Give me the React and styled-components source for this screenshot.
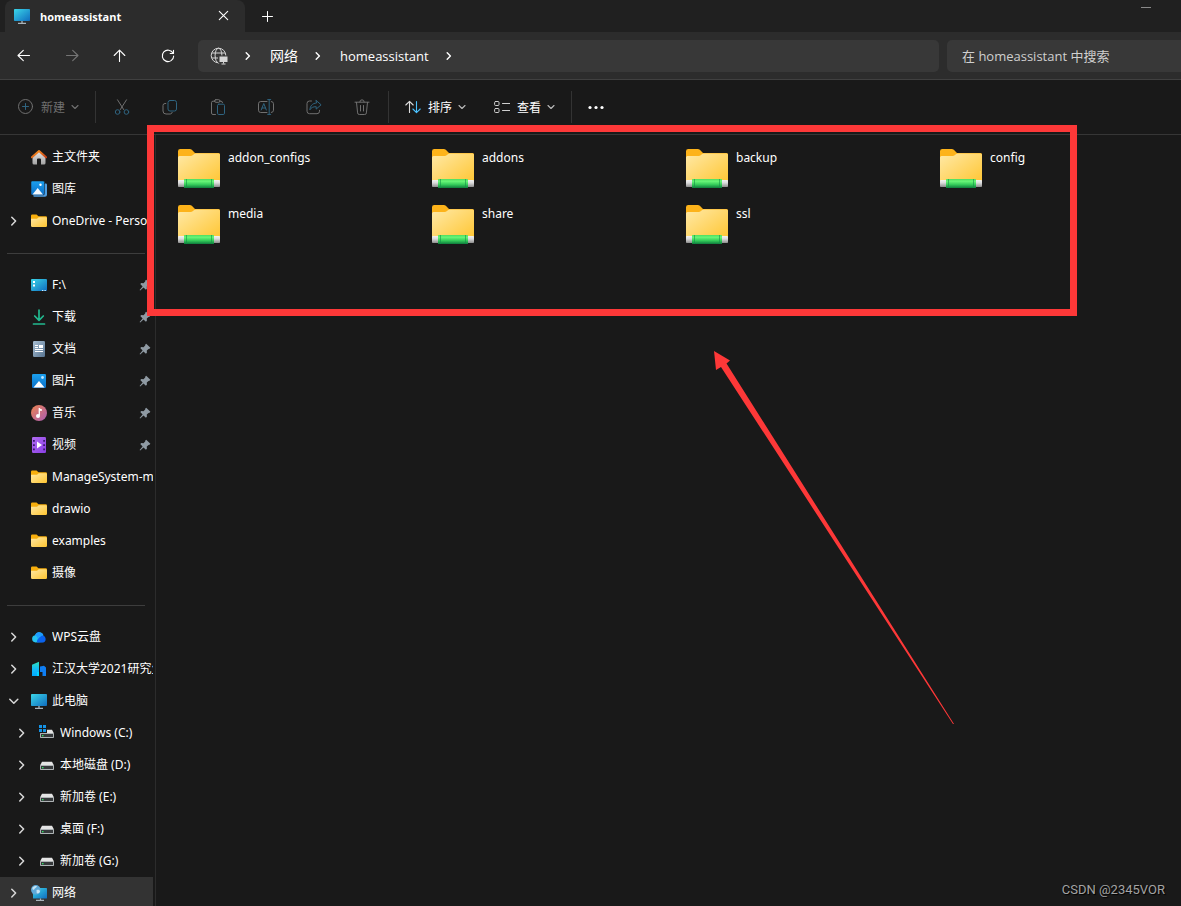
import React from 'react';
import styled, { createGlobalStyle } from 'styled-components';

const GlobalStyle = createGlobalStyle`
    * {
        box-sizing: border-box;
    }
    body {
        margin: 0;
        background: #191919;
        color: #ffffff;
        font-family: 'Noto Sans', 'Noto Sans CJK SC', sans-serif;
        font-size: 12px;
    }
    button, input {
        font: inherit;
        color: inherit;
    }
    svg {
        display: block;
        flex: none;
    }
    a {
        color: inherit;
        text-decoration: none;
    }
`;

/* ---------- line icons ---------- */

const Line = ({ size = 16, children, ...rest }) => (
    <svg width={size} height={size} viewBox={`0 0 ${size} ${size}`} fill="none" stroke="currentColor"
        strokeLinecap="round" strokeLinejoin="round" aria-hidden="true" {...rest}>
        {children}
    </svg>
);

const ACCENT = '#2f6480';

const BackIcon = () => <Line strokeWidth="1.1"><path d="M13.5 7.5H2.3M7.3 2.3 2 7.5l5.3 5.2" /></Line>;
const ForwardIcon = () => <Line strokeWidth="1.1"><path d="M2.500 7.500h11.200M8.700 2.300 14 7.500l-5.300 5.200" /></Line>;
const UpIcon = () => <Line strokeWidth="1.1"><path d="M7.500 13.500V2.400M2.200 7.500 7.500 2.200l5.300 5.300" /></Line>;
const RefreshIcon = () => (
    <Line strokeWidth="1.1"><path d="M13.1 5.3A5.700 5.700 0 1 0 13.700 8M13.500 2.300v3.200h-3.300" /></Line>
);
const CloseIcon = () => <Line strokeWidth="1.1"><path d="M3.3 3.3l8.400 8.400M11.700 3.300l-8.400 8.400" /></Line>;
const PlusIcon = () => <Line strokeWidth="1"><path d="M8.5 3.5v10M3.5 8.5h10" /></Line>;
const ChevronRight = () => <Line size={8} strokeWidth="1.4"><path d="M2.2.8 5.4 4 2.2 7.2" /></Line>;
const ChevronDown = () => <Line size={8} strokeWidth="1.1"><path d="M1 2.5l3 3 3-3" /></Line>;
const TreeChevron = ({ open }) => (
    <Line size={10} strokeWidth="1.5">
        <path d={open ? 'M.8 3.2l4 4 4-4' : 'M2.8 1.2 6.6 5.1 2.8 9'} />
    </Line>
);

const NewIcon = () => (
    <Line>
        <circle cx="7.500" cy="7.500" r="7" />
        <path d="M7.500 4.500v6M4.500 7.500h6" stroke={ACCENT} />
    </Line>
);
const CutIcon = () => (
    <Line>
        <path d="M3.5.8l6.2 9.8M12.5.8 6.3 10.6" />
        <circle cx="3.6" cy="13" r="2.3" stroke={ACCENT} />
        <circle cx="12.4" cy="13" r="2.3" stroke={ACCENT} />
    </Line>
);
const CopyIcon = () => (
    <Line>
        <path d="M3.8 4.5H3a2 2 0 0 0-2 2V12a3 3 0 0 0 3 3h4.2a2 2 0 0 0 2-1.6" />
        <rect x="6" y="1.5" width="8.5" height="10.5" rx="2" stroke={ACCENT} />
    </Line>
);
const PasteIcon = () => (
    <Line>
        <path d="M5 2.2H3A1.5 1.5 0 0 0 1.5 3.700V14A1.500 1.500 0 0 0 3 15.500h2.500M9.500 2.200h1.500A1.500 1.500 0 0 1 12.500 3.700" />
        <rect x="4.500" y=".7" width="5.500" height="2.600" rx="1.300" />
        <rect x="7.500" y="5.200" width="7" height="10.300" rx="1.300" stroke={ACCENT} />
    </Line>
);
const RenameIcon = () => (
    <Line>
        <path d="M9 2.500H2.800A2.300 2.300 0 0 0 .5 4.800v6.400a2.300 2.300 0 0 0 2.300 2.300H9M13.300 2.500a2.300 2.300 0 0 1 2.200 2.300v6.400a2.300 2.300 0 0 1-2.200 2.300" />
        <path d="M11.200.6v14.800M9.700.6h3M9.700 15.400h3M3.200 11l2.600-6.500L8.300 11M4.100 9h3.500" stroke={ACCENT} />
    </Line>
);
const ShareIcon = () => (
    <Line>
        <path d="M5.500 2H3.500A2.500 2.500 0 0 0 1 4.500v7.700A2.500 2.500 0 0 0 3.500 14.700h7.500a2.500 2.500 0 0 0 2.500-2.500v-.9" />
        <path d="M10.200 1.500l4.900 4.300-4.900 4.300V7.700C7 7.600 5 8.700 3.900 10.800 4.100 7 6.300 4.300 10.200 4z" stroke={ACCENT} />
    </Line>
);
const DeleteIcon = () => (
    <Line>
        <path d="M1 3.200h14M5.800 3A2.200 2.200 0 0 1 10.200 3M2.500 3.400l1.100 10.500a1.700 1.700 0 0 0 1.700 1.600h5.400a1.700 1.700 0 0 0 1.700-1.600l1.100-10.500M6.500 6.500v5.500M9.500 6.500v5.500" />
    </Line>
);
const SortIcon = () => (
    <Line strokeWidth="1.1">
        <path d="M4.500 13.500V2.500M.8 6l3.700-3.700L8.200 6" stroke="#dddddd" />
        <path d="M11.500 2.500v11M7.900 10l3.600 3.700 3.700-3.700" stroke="#4cc2ff" />
    </Line>
);
const ViewIcon = () => (
    <Line stroke="#cfcfcf">
        <rect x=".6" y="2.500" width="4.400" height="4" rx="1" />
        <rect x=".6" y="9.500" width="4.400" height="4" rx="1" />
        <path d="M8.500 4.500H16M8.500 11.500H16" />
    </Line>
);
const MoreIcon = () => (
    <svg width="16" height="16" viewBox="0 0 16 16" fill="#ffffff" aria-hidden="true">
        <circle cx="2" cy="8.500" r="1.600" />
        <circle cx="8" cy="8.500" r="1.600" />
        <circle cx="14" cy="8.500" r="1.600" />
    </svg>
);
const GlobeIcon = () => (
    <svg width="18" height="18" viewBox="0 0 18 18" fill="none" stroke="#d6d6d6" aria-hidden="true">
        <circle cx="8.500" cy="8.500" r="7.300" />
        <ellipse cx="8.500" cy="8.500" rx="3.400" ry="7.300" />
        <path d="M2 6h13M2 11h13" />
        <path d="M8.500 9h9v6.500H8.500z" fill="#383838" stroke="#383838" />
        <path d="M9.500 9.500h8V15h-8z" fill="#d6d6d6" stroke="none" />
        <path d="M13.500 15v1.500M11.500 17h4" />
    </svg>
);

/* ---------- coloured icons ---------- */

const Art = ({ children }) => (
    <svg width="16" height="16" viewBox="0 0 16 16" aria-hidden="true">{children}</svg>
);

const Gradients = () => (
    <Defs width="0" height="0" aria-hidden="true">
        <defs>
            <linearGradient id="folder" x1="0" y1="0" x2="1" y2="1">
                <stop offset="0" stopColor="#ffe9a6" />
                <stop offset="1" stopColor="#ffc530" />
            </linearGradient>
            <linearGradient id="screen" x1="0" y1="0" x2="1" y2="1">
                <stop offset="0" stopColor="#3bd6e8" />
                <stop offset="1" stopColor="#0f6cbf" />
            </linearGradient>
            <linearGradient id="pipe" x1="0" y1="0" x2="0" y2="1">
                <stop offset="0" stopColor="#4fdc60" />
                <stop offset=".25" stopColor="#68f678" />
                <stop offset=".6" stopColor="#37cf5c" />
                <stop offset="1" stopColor="#0d7c3c" />
            </linearGradient>
            <linearGradient id="cap" x1="0" y1="0" x2="0" y2="1">
                <stop offset="0" stopColor="#f2f2f2" />
                <stop offset=".4" stopColor="#dcdcdc" />
                <stop offset="1" stopColor="#8d8d8d" />
            </linearGradient>
            <linearGradient id="photo" x1="0" y1="0" x2="0" y2="1">
                <stop offset="0" stopColor="#1ba0ee" />
                <stop offset="1" stopColor="#0a6fc8" />
            </linearGradient>
            <linearGradient id="paper" x1="0" y1="0" x2="1" y2="1">
                <stop offset="0" stopColor="#a9bfd3" />
                <stop offset="1" stopColor="#587592" />
            </linearGradient>
            <linearGradient id="music" x1="0" y1="0" x2="1" y2="1">
                <stop offset="0" stopColor="#ee8550" />
                <stop offset="1" stopColor="#a95bb4" />
            </linearGradient>
            <linearGradient id="film" x1="0" y1="0" x2="1" y2="1">
                <stop offset="0" stopColor="#b06bf2" />
                <stop offset="1" stopColor="#8a3fe4" />
            </linearGradient>
            <linearGradient id="roof" x1="0" y1="0" x2="1" y2="1">
                <stop offset="0" stopColor="#ff9a1e" />
                <stop offset="1" stopColor="#c83f16" />
            </linearGradient>
            <linearGradient id="wall" x1="0" y1="0" x2="0" y2="1">
                <stop offset="0" stopColor="#e8e8e8" />
                <stop offset="1" stopColor="#a2a2a2" />
            </linearGradient>
            <linearGradient id="tower" x1="0" y1="0" x2="0" y2="1">
                <stop offset="0" stopColor="#2fe0b8" />
                <stop offset=".5" stopColor="#14bcf5" />
                <stop offset="1" stopColor="#00a9ff" />
            </linearGradient>
        </defs>
    </Defs>
);

const HomeIcon = () => (
    <Art>
        <path d="M1.500 7.500 8 1.800l6.500 5.700V14a1.500 1.500 0 0 1-1.500 1.500h-3V10.500a1 1 0 0 0-1-1H7a1 1 0 0 0-1 1v5H3A1.500 1.500 0 0 1 1.500 14z" fill="url(#wall)" />
        <path d="M.9 8.300 8 2l7.100 6.300" fill="none" stroke="url(#roof)" strokeWidth="2" strokeLinecap="round" strokeLinejoin="round" />
    </Art>
);
const GalleryIcon = () => (
    <Art>
        <path d="M14 2.500h.7a1.300 1.300 0 0 1 1.300 1.300v10a2 2 0 0 1-2 2H3.500A1.300 1.300 0 0 1 2.200 14.500z" fill="#4f9fe2" />
        <rect x="0" y="0" width="13.500" height="14" rx="1.300" fill="url(#photo)" stroke="#191919" strokeWidth=".5" />
        <circle cx="9.500" cy="3.800" r="1.200" fill="#ffffff" />
        <path d="M1.500 13.500 6.700 7l5.300 6.500z" fill="#f3f9ff" />
    </Art>
);
const PhotoIcon = () => (
    <Art>
        <rect x="1" y="1" width="14" height="14" rx="1.300" fill="url(#photo)" />
        <circle cx="11.500" cy="4.500" r="1.400" fill="#bfe6ff" />
        <path d="M2.500 14.500 8 8l5.500 6.500z" fill="#ffffff" />
    </Art>
);
const FolderIcon = () => (
    <Art>
        <path d="M0 2.800A1.200 1.200 0 0 1 1.200 1.600h4.300L7.500 3.300h7.300A1.200 1.200 0 0 1 16 4.500V8H0z" fill="#f7ae0d" />
        <path d="M0 5.800h6L7.800 4.200h7a1.200 1.200 0 0 1 1.200 1.200v7.300a1.200 1.200 0 0 1-1.200 1.200H1.200A1.200 1.200 0 0 1 0 12.700z" fill="url(#folder)" />
    </Art>
);
const DriveFolderIcon = () => (
    <Art>
        <rect x="0" y="2" width="16" height="12" rx="1" fill="url(#screen)" />
        <path d="M2 4h2v2H2zM2 7.500h2v2H2z" fill="#ffffff" />
        <path d="M11 13h1.300v1H11zM13.500 13h1.300v1h-1.300z" fill="#cdeeff" />
    </Art>
);
const DownloadIcon = () => (
    <Art>
        <path d="M8 1v10M3.700 7 8 11.300 12.300 7M2.500 15h11" fill="none" stroke="#22b98f" strokeWidth="1.700" strokeLinecap="round" strokeLinejoin="round" />
    </Art>
);
const DocumentIcon = () => (
    <Art>
        <rect x="2" y="0" width="12" height="16" rx="1.200" fill="url(#paper)" />
        <path d="M4 4.500h3M4 6.500h3M4 8.500h8M4 10.500h8" stroke="#ffffff" />
        <rect x="8" y="4" width="4" height="3" fill="#ffffff" />
    </Art>
);
const MusicIcon = () => (
    <Art>
        <circle cx="8" cy="8" r="8" fill="url(#music)" />
        <path d="M8.300 3v7.500" stroke="#ffffff" strokeWidth="1.300" />
        <path d="M8 2.800c.5 1.200 1.800 1.200 2.800 1.200v2C9.500 6 8.500 5.500 8 5z" fill="#ffffff" />
        <circle cx="7" cy="11" r="2" fill="#ffffff" />
    </Art>
);
const VideoIcon = () => (
    <Art>
        <rect x="1" y="0" width="14" height="16" rx="1.200" fill="url(#film)" />
        <path d="M2 3h1.800v1.800H2zM2 7.200h1.800V9H2zM2 11.400h1.800v1.800H2zM12.200 3H14v1.800h-1.800zM12.200 7.200H14V9h-1.800zM12.200 11.400H14v1.800h-1.800z" fill="#3c1a70" />
        <path d="M6 4.500 11 8 6 11.500z" fill="#ffffff" />
    </Art>
);
const CloudIcon = () => (
    <Art>
        <path d="M4.500 13.500A3.700 3.700 0 0 1 4 6.200 4.600 4.600 0 0 1 12 5.200l1 7.800z" fill="#25c2ef" />
        <path d="M5 4.500A4.500 4.500 0 0 1 12.500 6.600C9.500 6.500 7.700 8 6.500 9.800 6.500 8 5.500 7 3.900 6.300z" fill="#1e9bff" />
        <path d="M6 13.500C5.500 11 8 8 11 6.500a3.600 3.600 0 0 1 1.200 7z" fill="#0a62ee" />
    </Art>
);
const TowerIcon = () => (
    <Art>
        <path d="M1 3.800 8 .7V15H1z" fill="url(#tower)" />
        <path d="M9 5.500 13 4.800 15 6.500V15h-3.500v-4H9z" fill="#0f7ef2" />
        <path d="M6 11h2v4H6z" fill="#00d5ff" />
    </Art>
);
const PcIcon = () => (
    <Art>
        <rect x="0" y="1" width="16" height="12" rx=".8" fill="url(#screen)" />
        <path d="M8 13v2M4 15.300h8" stroke="#a9b3ba" strokeWidth="1.300" />
    </Art>
);
const DiskIcon = ({ system }) => (
    <Art>
        <path d="M3 4.800h10l2 3.700H1z" fill="#e4e4e4" />
        <rect x="1" y="8" width="14" height="5" rx=".8" fill="#aeb3b5" />
        <rect x="2" y="9" width="12" height="3" fill="#36393b" />
        <rect x="3" y="10" width="1.500" height="1.300" fill="#34e066" />
        {system && (
            <>
                <path d="M0 0h8v8H0z" fill="#191919" />
                <path d="M0 0h3v3H0zM4 0h3v3H4zM0 4h3v3H0zM4 4h3v3H4z" fill="#1593e6" />
            </>
        )}
    </Art>
);
const NetworkIcon = () => (
    <Art>
        <rect x="2" y="3" width="14" height="10.500" rx=".6" fill="url(#screen)" />
        <path d="M9.500 13.500V15M5 15.400h8" stroke="#a9b3ba" strokeWidth="1.200" />
        <circle cx="4.800" cy="4.800" r="4.800" fill="#5fa9d8" />
        <path d="M1.500 2.500C3 .8 5 .5 6 1.300 5.500 3 3.500 3 3 4.800 2 5 1 4 1.500 2.500zM5.500 5c2-.5 3.500 0 3.500 1.500S6.500 9 5.700 8z" fill="#c4e4f4" />
    </Art>
);
const PinIcon = () => (
    <svg width="12" height="12" viewBox="0 0 12 12" aria-hidden="true">
        <path d="M7.200.8l4.200 4-.9.900-1 .2-1.700 1.700.1 2.200-1 1-2.400-2.200L1.200 11.500.6 10.900 3.600 7.500 1.300 5.100l1-1 2.200.2L6.200 2.600 6.300 1.600z" fill="#8f9aa3" />
    </svg>
);

const NetworkFolder = () => (
    <svg width="42" height="39" viewBox="0 0 42 39" aria-hidden="true">
        <path d="M0 2.200A2.200 2.200 0 0 1 2.200 0h9.600a3 3 0 0 1 2 .8L17 4h23.500A1.500 1.500 0 0 1 42 5.500V12H0z" fill="#fdb31a" />
        <path d="M0 8.500A1.500 1.500 0 0 1 1.500 7h11a4 4 0 0 0 2.500-.9L16.200 5A2 2 0 0 1 17.500 4.600H40.500A1.500 1.500 0 0 1 42 6v29H0z" fill="url(#folder)" />
        <rect x="0" y="31" width="42" height="7" rx=".8" fill="url(#cap)" />
        <rect x="6" y="30" width="30" height="9" rx=".5" fill="url(#pipe)" />
        <path d="M8.500 30v9M33.500 30v9" stroke="#129048" strokeWidth=".6" />
    </svg>
);

/* ---------- layout ---------- */

const Defs = styled.svg`
    position: absolute;
`;

const Window = styled.div`
    position: relative;
    display: flex;
    flex-direction: column;
    height: 100vh;
    overflow: hidden;
`;

const TitleBar = styled.header`
    display: flex;
    align-items: stretch;
    height: 32px;
    padding-left: 5px;
    background: #202020;
`;

const Tab = styled.div`
    display: flex;
    align-items: center;
    width: 240px;
    padding: 0 13px 0 9px;
    border-radius: 8px 8px 0 0;
    background: #2c2c2c;
`;

const TabTitle = styled.span`
    flex: 1;
    margin-left: 10px;
    font-family: 'Open Sans', sans-serif;
    font-size: 11px;
    font-weight: 700;
`;

const PlainButton = styled.button`
    display: flex;
    align-items: center;
    justify-content: center;
    padding: 0;
    border: 0;
    background: none;
`;

const NewTab = styled(PlainButton)`
    width: 44px;
`;

const Minimize = styled(PlainButton)`
    width: 46px;
    height: 15px;
    margin: 0 12px 0 auto;
    span {
        width: 10px;
        height: 1px;
        background: #8a8a8a;
    }
`;

const NavBar = styled.div`
    display: flex;
    align-items: center;
    height: 48px;
    border-bottom: 1px solid #404040;
    background: #2c2c2c;
`;

const NavButton = styled(PlainButton)`
    width: 48px;
    height: 32px;
    color: ${(p) => (p.disabled ? '#757575' : '#ffffff')};
`;

const Address = styled.nav`
    display: flex;
    flex: 1;
    align-items: center;
    height: 32px;
    margin: 0 8px 0 6px;
    padding-left: 12px;
    border-radius: 5px;
    background: #383838;
    font-family: 'Open Sans', 'Noto Sans CJK SC', sans-serif;
    line-height: 20px;
`;

const Crumb = styled.div`
    display: flex;
    align-items: center;
    gap: 18px;
    margin-left: 16px;
    font-size: ${(p) => (p.$cjk ? 14 : 13)}px;
`;

const Search = styled.input`
    width: 234px;
    height: 32px;
    padding: 0 0 0 15px;
    border: 0;
    border-radius: 5px 0 0 5px;
    outline: 0;
    background: #383838;
    font-family: 'Open Sans', 'Noto Sans CJK SC', sans-serif;
    font-size: 13px;
    &::placeholder {
        color: #cfcfcf;
        opacity: 1;
    }
`;

const Toolbar = styled.div`
    display: flex;
    align-items: center;
    height: 55px;
    padding-left: 4px;
    border-bottom: 1px solid #363636;
`;

const ToolButton = styled(PlainButton)`
    width: ${(p) => p.$width || 48}px;
    height: 32px;
    color: ${(p) => (p.disabled ? '#707070' : '#ffffff')};
`;

const ToolMenu = styled(ToolButton)`
    width: auto;
    gap: 7px;
    padding: 0 14px;
    svg:last-child {
        margin-left: -1px;
        color: ${(p) => (p.disabled ? '#707070' : '#bbbbbb')};
    }
`;

const Divider = styled.span`
    width: 1px;
    height: 32px;
    margin: 0 2px;
    background: #333333;
`;

const Body = styled.div`
    display: flex;
    flex: 1;
    min-height: 0;
`;

const Sidebar = styled.nav`
    flex: none;
    width: 156px;
    padding: 6px 2px 0 0;
    overflow: hidden;
    border-right: 1px solid #2c2c2c;
`;

const TreeRow = styled.a`
    display: flex;
    align-items: center;
    height: 32px;
    padding-left: ${(p) => (p.$nested ? 17 : 9)}px;
    background: ${(p) => (p.$selected ? '#333333' : 'transparent')};
    color: #ffffff;
`;

const Toggle = styled.span`
    display: flex;
    flex: none;
    width: 22px;
    color: #d8d8d8;
`;

const TreeLabel = styled.span`
    flex: 1;
    min-width: 0;
    margin-left: 5px;
    overflow: hidden;
    line-height: 20px;
    white-space: nowrap;
`;

const PinSlot = styled.span`
    margin-right: 2px;
`;

const TreeGap = styled.hr`
    height: 1px;
    margin: 16px 8px 15px 7px;
    border: 0;
    background: #3d3d3d;
`;

const Files = styled.main`
    display: grid;
    flex: 1;
    grid-template-columns: repeat(auto-fill, 210px);
    align-content: start;
    gap: 17px 44px;
    padding: 14px 0 0 22px;
`;

const FileItem = styled.a`
    display: flex;
    gap: 8px;
    line-height: 18px;
`;

const Highlight = styled.div`
    position: absolute;
    top: 125px;
    left: 147px;
    width: 930px;
    height: 191px;
    border: 7px solid #fd3838;
    pointer-events: none;
`;

const Pointer = styled.svg`
    position: absolute;
    top: 351px;
    left: 714px;
    pointer-events: none;
`;

const Watermark = styled.div`
    position: absolute;
    right: 16px;
    bottom: 7px;
    color: #a3a3a3;
    font-family: Roboto, sans-serif;
    font-size: 13px;
    line-height: 18px;
    text-shadow: 1px 1px 1px #000000;
`;

const quickAccess = [
    { name: '主文件夹', icon: <HomeIcon /> },
    { name: '图库', icon: <GalleryIcon /> },
    { name: 'OneDrive - Personal', icon: <FolderIcon />, toggle: true },
];

const pinned = [
    { name: 'F:\\', icon: <DriveFolderIcon />, pin: true },
    { name: '下载', icon: <DownloadIcon />, pin: true },
    { name: '文档', icon: <DocumentIcon />, pin: true },
    { name: '图片', icon: <PhotoIcon />, pin: true },
    { name: '音乐', icon: <MusicIcon />, pin: true },
    { name: '视频', icon: <VideoIcon />, pin: true },
    { name: 'ManageSystem-master', icon: <FolderIcon /> },
    { name: 'drawio', icon: <FolderIcon /> },
    { name: 'examples', icon: <FolderIcon /> },
    { name: '摄像', icon: <FolderIcon /> },
];

const places = [
    { name: 'WPS云盘', icon: <CloudIcon />, toggle: true },
    { name: '江汉大学2021研究生', icon: <TowerIcon />, toggle: true },
    { name: '此电脑', icon: <PcIcon />, toggle: true, open: true },
    { name: 'Windows (C:)', icon: <DiskIcon system />, toggle: true, nested: true },
    { name: '本地磁盘 (D:)', icon: <DiskIcon />, toggle: true, nested: true },
    { name: '新加卷 (E:)', icon: <DiskIcon />, toggle: true, nested: true },
    { name: '桌面 (F:)', icon: <DiskIcon />, toggle: true, nested: true },
    { name: '新加卷 (G:)', icon: <DiskIcon />, toggle: true, nested: true },
    { name: '网络', icon: <NetworkIcon />, toggle: true, selected: true },
];

const folders = ['addon_configs', 'addons', 'backup', 'config', 'media', 'share', 'ssl'];

const Tree = ({ items }) => items.map((item) => (
    <TreeRow key={item.name} href="#" $nested={item.nested} $selected={item.selected}>
        <Toggle>{item.toggle && <TreeChevron open={item.open} />}</Toggle>
        {item.icon}
        <TreeLabel>{item.name}</TreeLabel>
        {item.pin && <PinSlot><PinIcon /></PinSlot>}
    </TreeRow>
));

export default function App() {
    return (
        <Window>
            <GlobalStyle />
            <Gradients />
            <TitleBar>
                <Tab>
                    <PcIcon />
                    <TabTitle>homeassistant</TabTitle>
                    <PlainButton aria-label="关闭标签页"><CloseIcon /></PlainButton>
                </Tab>
                <NewTab aria-label="新标签页"><PlusIcon /></NewTab>
                <Minimize aria-label="最小化"><span /></Minimize>
            </TitleBar>
            <NavBar>
                <NavButton aria-label="后退"><BackIcon /></NavButton>
                <NavButton aria-label="前进" disabled><ForwardIcon /></NavButton>
                <NavButton aria-label="向上"><UpIcon /></NavButton>
                <NavButton aria-label="刷新"><RefreshIcon /></NavButton>
                <Address aria-label="地址">
                    <GlobeIcon />
                    <Crumb $cjk><ChevronRight /><a href="#">网络</a></Crumb>
                    <Crumb><ChevronRight /><a href="#">homeassistant</a></Crumb>
                    <Crumb><ChevronRight /></Crumb>
                </Address>
                <Search type="search" aria-label="搜索" placeholder="在 homeassistant 中搜索" />
            </NavBar>
            <Toolbar>
                <ToolMenu disabled><NewIcon />新建<ChevronDown /></ToolMenu>
                <Divider />
                <ToolButton disabled aria-label="剪切"><CutIcon /></ToolButton>
                <ToolButton disabled aria-label="复制"><CopyIcon /></ToolButton>
                <ToolButton disabled aria-label="粘贴"><PasteIcon /></ToolButton>
                <ToolButton disabled aria-label="重命名"><RenameIcon /></ToolButton>
                <ToolButton disabled aria-label="共享"><ShareIcon /></ToolButton>
                <ToolButton disabled aria-label="删除"><DeleteIcon /></ToolButton>
                <Divider />
                <ToolMenu><SortIcon />排序<ChevronDown /></ToolMenu>
                <ToolMenu><ViewIcon />查看<ChevronDown /></ToolMenu>
                <Divider />
                <ToolButton $width={44} aria-label="更多"><MoreIcon /></ToolButton>
            </Toolbar>
            <Body>
                <Sidebar aria-label="导航窗格">
                    <Tree items={quickAccess} />
                    <TreeGap />
                    <Tree items={pinned} />
                    <TreeGap />
                    <Tree items={places} />
                </Sidebar>
                <Files>
                    {folders.map((name) => (
                        <FileItem key={name} href="#">
                            <NetworkFolder />
                            <span>{name}</span>
                        </FileItem>
                    ))}
                </Files>
            </Body>
            <Highlight />
            <Pointer width="241" height="374" viewBox="0 0 241 374" aria-hidden="true">
                <path d="M0 0l16 9.500-3.500 3L240 373h-1L7 16l-5 3z" fill="#fd3838" />
            </Pointer>
            <Watermark>CSDN @2345VOR</Watermark>
        </Window>
    );
}
